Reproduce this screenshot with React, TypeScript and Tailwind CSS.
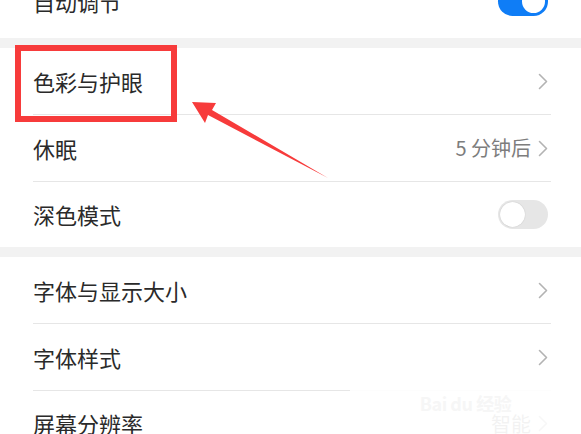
const Chevron = () => (
  <svg width="10" height="17" viewBox="0 0 10 17" fill="none" aria-hidden>
    <path d="M1.5 1.5 L8.5 8.5 L1.5 15.5" stroke="#b3b3b3" strokeWidth="1.6" strokeLinecap="round" strokeLinejoin="round" />
  </svg>
)

function Toggle({ on }: { on?: boolean }) {
  return on ? (
    <div className="flex h-[29px] w-[50px] items-center justify-end rounded-full bg-[#0f7df6] px-[3px]">
      <div className="h-[23px] w-[23px] rounded-full bg-white" />
    </div>
  ) : (
    <div className="flex h-[29px] w-[50px] items-center rounded-full bg-[#e6e6e6] px-[2px]">
      <div className="h-[25px] w-[25px] rounded-full bg-white shadow-[0_0_1px_rgba(0,0,0,0.25)]" />
    </div>
  )
}

function Row({
  label,
  value,
  right,
  last,
}: {
  label: string
  value?: string
  right?: React.ReactNode
  last?: boolean
}) {
  return (
    <div
      className={`ml-[33px] mr-[30px] flex items-center justify-between pr-[3px] ${
        last ? "h-[65px]" : "h-[67px] border-b border-[#e6e6e6]"
      }`}
    >
      <span className="text-[22px] text-[#2a2a2a]">{label}</span>
      {right ?? (
        <span className="flex items-center gap-[7px]">
          {value && <span className="text-[20px] text-[#7d7d7d]">{value}</span>}
          <Chevron />
        </span>
      )}
    </div>
  )
}

export default function App() {
  return (
    <div className="relative h-[434px] w-[581px] overflow-hidden bg-white font-['Noto_Sans_CJK_SC',sans-serif]">
      <div className="-mt-[32px]">
        {/* Brightness row, mostly scrolled off */}
        <div className="ml-[33px] mr-[30px] flex h-[70px] items-center justify-between pb-[4px] pr-[3px]">
          <span className="text-[22px] text-[#2a2a2a]">自动调节</span>
          <Toggle on />
        </div>
        <div className="h-[10px] bg-[#f2f2f2]" />

        <Row label="色彩与护眼" />
        <Row label="休眠" value="5 分钟后" />
        <Row label="深色模式" right={<Toggle />} last />

        <div className="h-[10px] bg-[#f2f2f2]" />

        <Row label="字体与显示大小" />
        <Row label="字体样式" />
        <Row label="屏幕分辨率" value="智能" last />
      </div>

      {/* Annotation: red box + arrow */}
      <div className="absolute left-[15px] top-[45px] h-[77px] w-[162px] border-[6px] border-[#f73b3b]" />
      <svg className="absolute left-0 top-0" width="581" height="434" aria-hidden>
        <polygon
          points="192,102 216,103 212,110 328,178 208,115 205,123"
          fill="#f73b3b"
        />
      </svg>

      {/* Watermark haze */}
      <div className="absolute left-[350px] top-[388px] flex h-[46px] w-[231px] justify-center bg-white/90 pt-[2px]">
        <span className="text-[18px] font-bold tracking-tight text-[#f6f6f6]">Bai du 经验</span>
      </div>
    </div>
  )
}
